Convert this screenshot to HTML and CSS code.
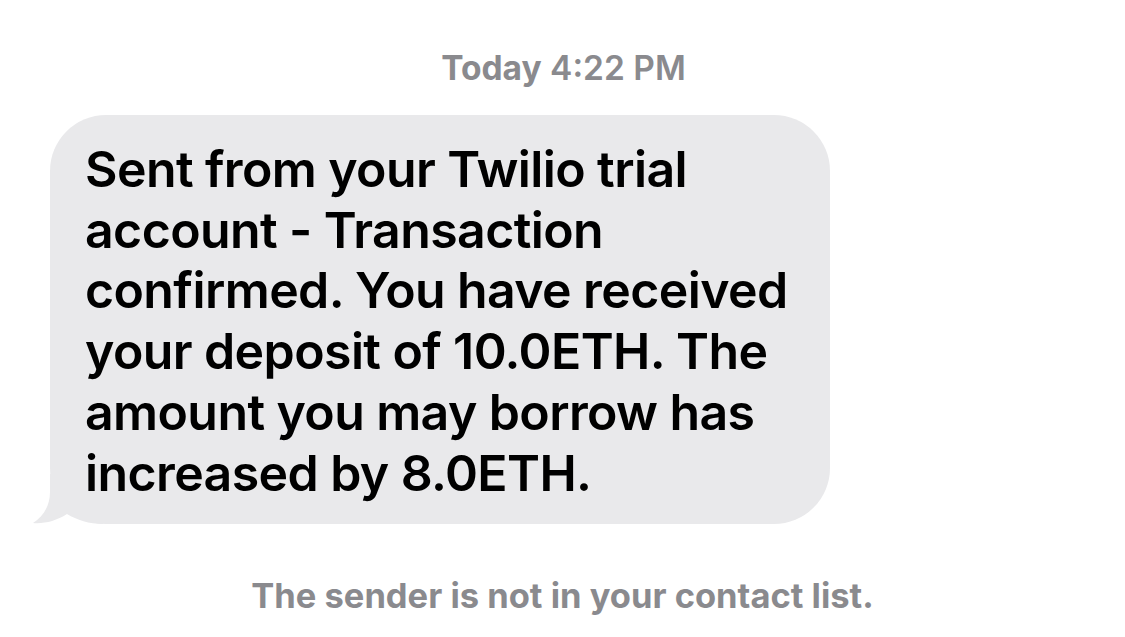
FILE: index.html
```html
<!DOCTYPE html>
<html>
<head>
<meta charset="utf-8">
<link rel="stylesheet" href="styles.css">
</head>
<body>
<div class="screen">
  <div class="stamp"><span class="day">Today</span> 4:22 PM</div>
  <div class="row">
    <div class="bubble">
      <svg class="tail" width="70" height="50" viewBox="0 0 70 50"><path d="M17 0 L17 18 C17 32 10 43 0 49 C11 50 23 47 34 40 C44 46 56 50 70 50 L70 0 Z" fill="#e9e9eb"/></svg>
      <p class="msg">Sent from your Twilio trial account - Transaction confirmed. You have received your deposit of 10.0ETH. The amount you may borrow has increased by 8.0ETH.</p>
    </div>
  </div>
  <div class="note">The sender is not in your contact list.</div>
</div>
</body>
</html>
```
FILE: styles.css
```css
html, body { margin: 0; padding: 0; background: #fff; }
.screen {
  width: 1125px; height: 637px;
  font-family: Inter, "Noto Sans", sans-serif;
  display: flex; flex-direction: column;
}
.stamp {
  margin-top: 48px;
  text-align: center;
  color: #8a8a8e;
  font-size: 33.5px;
  font-weight: 600;
  line-height: 40px;
  padding-left: 2px;
}
.stamp .day { font-weight: 700; }
.row { padding-left: 50px; margin-top: 27px; }
.bubble {
  position: relative;
  width: 780px;
  height: 409px;
  box-sizing: border-box;
  background: #e9e9eb;
  border-radius: 56px;
  padding: 24px 30px 0 35px;
}
.msg {
  position: relative;
  margin: 0;
  color: #000;
  font-size: 50px;
  font-weight: 560;
  line-height: 60.7px;
  letter-spacing: -0.6px;
}
.tail { position: absolute; left: -17px; bottom: 0; }
.note {
  margin-top: 51px;
  text-align: center;
  color: #8a8a8e;
  font-size: 34.5px;
  font-weight: 700;
  line-height: 42px;
}
```
